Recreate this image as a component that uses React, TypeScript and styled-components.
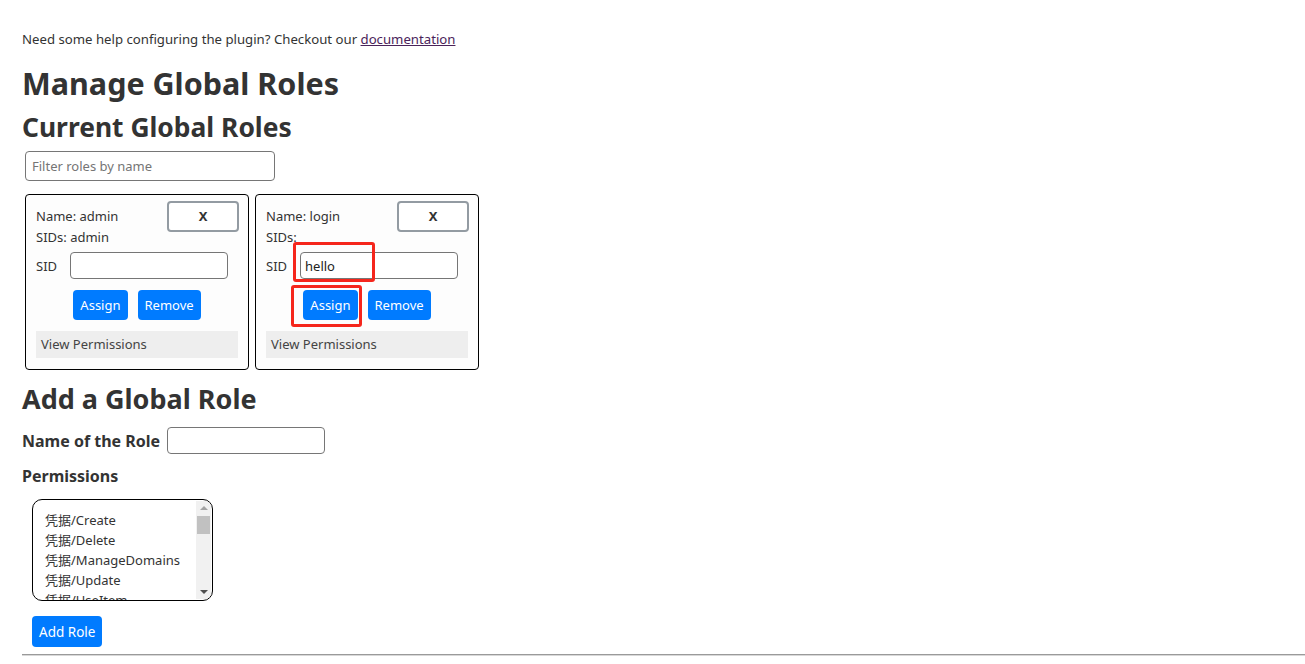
import React from "react"
import styled, { createGlobalStyle } from "styled-components"

const GlobalStyle = createGlobalStyle`
  html, body {
    margin: 0;
    padding: 0;
    background: #fff;
  }
  body {
    font-family: "Noto Sans", "Noto Sans CJK SC", sans-serif;
    color: #333;
    font-size: 13px;
  }
`

const Page = styled.div`
  padding: 30px 0 0 22px;
`

const Help = styled.p`
  margin: 0;
  font-size: 13.2px;
  line-height: 18px;
  color: #333;
  a {
    color: #4a235a;
    text-decoration: underline;
  }
`

const Title = styled.h1`
  margin: 13px 0 0;
  font-size: 30.5px;
  line-height: 44px;
  font-weight: 700;
`

const SubTitle = styled.h2`
  margin: 0;
  font-size: 26.4px;
  line-height: 44px;
  font-weight: 700;
`

const Filter = styled.input`
  display: block;
  margin: 2px 0 0 3px;
  width: 250px;
  height: 30px;
  box-sizing: border-box;
  border: 1px solid #767676;
  border-radius: 4px;
  padding: 0 6px;
  font: inherit;
  font-size: 13px;
  &::placeholder {
    color: #757575;
  }
`

const Cards = styled.div`
  display: flex;
  gap: 6px;
  margin: 13px 0 0 3px;
`

const Card = styled.div`
  width: 224px;
  box-sizing: border-box;
  border: 1px solid #000;
  border-radius: 4px;
  background: #fdfdfd;
  padding: 11px 9px 11px 10px;
  display: flex;
  flex-direction: column;
`

const CardHead = styled.div`
  display: flex;
  justify-content: space-between;
  align-items: center;
  height: 21px;
  line-height: 21px;
`

const Line = styled.div`
  line-height: 20px;
`

const CloseButton = styled.button`
  flex: none;
  width: 72px;
  height: 31px;
  box-sizing: border-box;
  border: 2px solid #939ba2;
  border-radius: 4px;
  background: #fff;
  color: #333;
  font: inherit;
  font-size: 13px;
  font-weight: 700;
  cursor: pointer;
`

const SidRow = styled.div`
  display: flex;
  align-items: center;
  gap: 13px;
  margin-top: 5px;
`

const SidInput = styled.input`
  width: 158px;
  height: 27px;
  box-sizing: border-box;
  border: 1px solid #767676;
  border-radius: 4px;
  padding: 0 4px;
  font: inherit;
  font-size: 13px;
  color: #222;
`

const Actions = styled.div`
  display: flex;
  justify-content: center;
  gap: 10px;
  margin-top: 11px;
  padding-right: 1px;
`

const PrimaryButton = styled.button`
  height: 30px;
  padding: 0 7px;
  border: 0;
  border-radius: 4px;
  background: #007bff;
  color: #fff;
  font: inherit;
  font-size: 13px;
  cursor: pointer;
`

const Highlight = styled.span<{ $l: number; $t: number; $w: number; $h: number }>`
  position: relative;
  display: inline-flex;
  &::after {
    content: "";
    position: absolute;
    left: ${(p) => p.$l}px;
    top: ${(p) => p.$t}px;
    width: ${(p) => p.$w}px;
    height: ${(p) => p.$h}px;
    box-sizing: border-box;
    border: 3px solid #f5261c;
    border-radius: 3px;
    pointer-events: none;
  }
`

const ViewPerms = styled.div`
  margin-top: 11px;
  margin-right: 1px;
  background: #eee;
  height: 27px;
  line-height: 27px;
  padding: 0 5px;
  color: #444;
`

const AddTitle = styled.h2`
  margin: 7px 0 0;
  font-size: 27px;
  line-height: 44px;
  font-weight: 700;
`

const NameRow = styled.div`
  display: flex;
  align-items: center;
  gap: 7px;
  margin-top: 6px;
`

const Label = styled.label`
  font-size: 16px;
  font-weight: 700;
  line-height: 26px;
`

const NameInput = styled.input`
  width: 158px;
  height: 27px;
  box-sizing: border-box;
  border: 1px solid #767676;
  border-radius: 4px;
  padding: 0 4px;
  font: inherit;
`

const PermLabel = styled.div`
  margin-top: 9px;
  font-size: 16px;
  font-weight: 700;
  line-height: 26px;
`

const ListBox = styled.div`
  margin: 10px 0 0 10px;
  width: 181px;
  height: 102px;
  box-sizing: border-box;
  border: 1px solid #000;
  border-radius: 10px;
  overflow: hidden;
  display: flex;
  background: #fff;
`

const Options = styled.div`
  flex: 1;
  padding: 10px 0 0 12px;
  overflow: hidden;
`

const Option = styled.div`
  font-size: 13px;
  line-height: 20px;
  white-space: nowrap;
  color: #333;
`

const Scrollbar = styled.div`
  width: 15px;
  margin: 1px 1px 1px 0;
  background: #f1f1f1;
  display: flex;
  flex-direction: column;
  align-items: center;
`

const Arrow = styled.div<{ $down?: boolean }>`
  width: 0;
  height: 0;
  margin: 5px 0;
  border-left: 4px solid transparent;
  border-right: 4px solid transparent;
  ${(p) =>
    p.$down
      ? "border-top: 4px solid #505050; margin-top: auto;"
      : "border-bottom: 4px solid #a3a3a3;"}
`

const Thumb = styled.div`
  width: 13px;
  height: 18px;
  margin-top: 1px;
  background: #c1c1c1;
`

const AddButton = styled(PrimaryButton)`
  margin: 15px 0 0 10px;
  height: 31px;
  padding: 0 7px;
  font-size: 13.5px;
`

const Rule = styled.hr`
  margin: 7px 0 0;
  border: 0;
  border-top: 1px solid #9a9a9a;
  border-bottom: 1px solid #d8d8d8;
`

const perms = [
  "凭据/Create",
  "凭据/Delete",
  "凭据/ManageDomains",
  "凭据/Update",
  "凭据/UseItem",
]

export default function App() {
  return (
    <Page>
      <GlobalStyle />
      <Help>
        Need some help configuring the plugin? Checkout our{" "}
        <a href="#">documentation</a>
      </Help>
      <Title>Manage Global Roles</Title>
      <SubTitle>Current Global Roles</SubTitle>
      <Filter placeholder="Filter roles by name" />
      <Cards>
        <Card>
          <CardHead>
            <span>Name: admin</span>
            <CloseButton>X</CloseButton>
          </CardHead>
          <Line>SIDs: admin</Line>
          <SidRow>
            <span>SID</span>
            <SidInput />
          </SidRow>
          <Actions>
            <PrimaryButton>Assign</PrimaryButton>
            <PrimaryButton>Remove</PrimaryButton>
          </Actions>
          <ViewPerms>View Permissions</ViewPerms>
        </Card>
        <Card>
          <CardHead>
            <span>Name: login</span>
            <CloseButton>X</CloseButton>
          </CardHead>
          <Line>SIDs:</Line>
          <SidRow>
            <span>SID</span>
            <Highlight $l={-7} $t={-10} $w={82} $h={40}>
              <SidInput defaultValue="hello" />
            </Highlight>
          </SidRow>
          <Actions>
            <Highlight $l={-12} $t={-5} $w={71} $h={42}>
              <PrimaryButton>Assign</PrimaryButton>
            </Highlight>
            <PrimaryButton>Remove</PrimaryButton>
          </Actions>
          <ViewPerms>View Permissions</ViewPerms>
        </Card>
      </Cards>
      <AddTitle>Add a Global Role</AddTitle>
      <NameRow>
        <Label>Name of the Role</Label>
        <NameInput />
      </NameRow>
      <PermLabel>Permissions</PermLabel>
      <ListBox>
        <Options>
          {perms.map((p) => (
            <Option key={p}>{p}</Option>
          ))}
        </Options>
        <Scrollbar>
          <Arrow />
          <Thumb />
          <Arrow $down />
        </Scrollbar>
      </ListBox>
      <AddButton>Add Role</AddButton>
      <Rule />
    </Page>
  )
}
